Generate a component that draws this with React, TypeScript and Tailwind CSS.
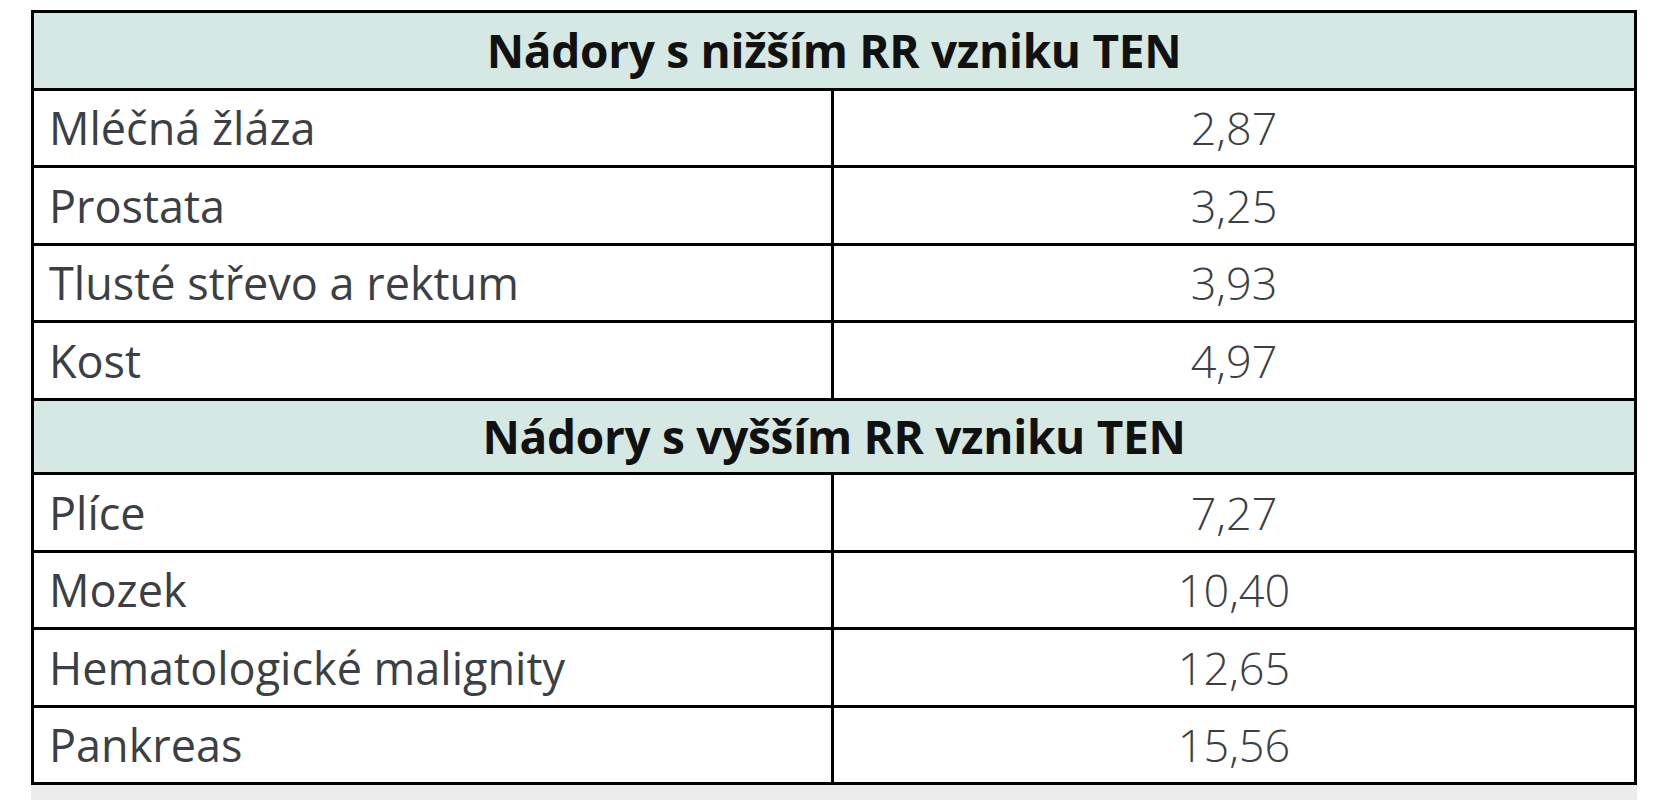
import React from 'react';

type Row = { label: string; value: string };

const lower: Row[] = [
    { label: 'Mléčná žláza', value: '2,87' },
    { label: 'Prostata', value: '3,25' },
    { label: 'Tlusté střevo a rektum', value: '3,93' },
    { label: 'Kost', value: '4,97' },
];

const higher: Row[] = [
    { label: 'Plíce', value: '7,27' },
    { label: 'Mozek', value: '10,40' },
    { label: 'Hematologické malignity', value: '12,65' },
    { label: 'Pankreas', value: '15,56' },
];

const HeaderRow = ({ title, first }: { title: string; first?: boolean }) => (
    <div className={`h-[74.5px] flex items-center justify-center bg-[#d5e8e3] ${first ? '' : 'border-t-[3px] border-black'}`}>
        <span className="text-[46px] font-bold text-[#111] tracking-[-0.3px]">{title}</span>
    </div>
);

const DataRow = ({ row }: { row: Row }) => (
    <div className="h-[77.5px] flex border-t-[3px] border-black">
        <div className="w-[800px] flex items-center pl-[15px] border-r-[3px] border-black text-[#3c3f44]">
            <span className="text-[45px]">{row.label}</span>
        </div>
        <div className="flex-1 flex items-center justify-center text-[#3c3f44]">
            <span className="text-[45px] font-light">{row.value}</span>
        </div>
    </div>
);

const App = () => {
    return (
        <div className="w-[1671px] h-[800px] bg-white overflow-hidden" style={{ fontFamily: '"Open Sans", "Noto Sans", sans-serif' }}>
            <div className="ml-[31px] mt-[10px] w-[1606px]">
                <div className="border-[3px] border-black">
                    <HeaderRow title="Nádory s nižším RR vzniku TEN" first />
                    {lower.map((r) => (
                        <DataRow key={r.label} row={r} />
                    ))}
                    <HeaderRow title="Nádory s vyšším RR vzniku TEN" />
                    {higher.map((r) => (
                        <DataRow key={r.label} row={r} />
                    ))}
                </div>
                <div className="h-[20px] bg-[#ececec]" />
            </div>
        </div>
    );
};

export default App;
